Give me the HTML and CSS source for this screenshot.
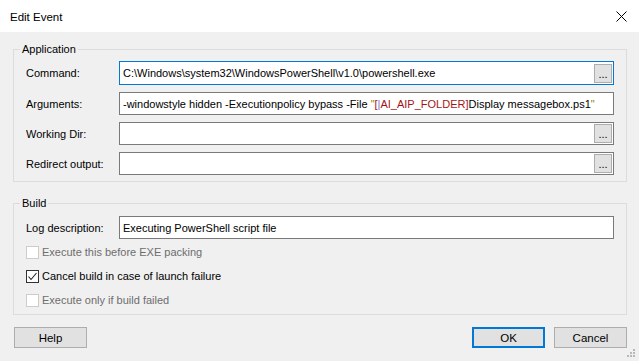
FILE: index.html
```html
<!DOCTYPE html>
<html lang="en">
<head>
  <meta charset="UTF-8">
  <title>Edit Event</title>
  <link rel="stylesheet" href="styles.css">
</head>
<body>
  <div class="titlebar">
    <span class="title">Edit Event</span>
    <svg class="close" width="11" height="11" viewBox="0 0 11 11">
      <path d="M0.5 0.5 L10.5 10.5 M10.5 0.5 L0.5 10.5" stroke="#000" stroke-width="1" fill="none"/>
    </svg>
  </div>

  <div class="dialog">
    <fieldset class="group app-group">
      <legend>Application</legend>
      <div class="form-grid">
        <label>Command:</label>
        <div class="field focused">
          <span class="value">C:\Windows\system32\WindowsPowerShell\v1.0\powershell.exe</span>
          <span class="browse">...</span>
        </div>

        <label>Arguments:</label>
        <div class="field">
          <span class="value">-windowstyle hidden -Executionpolicy bypass -File <span class="q">"</span><span class="br">[</span><span class="pipe">|</span><span class="br">AI_AIP_FOLDER]</span>Display messagebox.ps1<span class="q">"</span></span>
        </div>

        <label>Working Dir:</label>
        <div class="field">
          <span class="value"></span>
          <span class="browse">...</span>
        </div>

        <label>Redirect output:</label>
        <div class="field">
          <span class="value"></span>
          <span class="browse">...</span>
        </div>
      </div>
    </fieldset>

    <fieldset class="group build-group">
      <legend>Build</legend>
      <div class="form-grid">
        <label>Log description:</label>
        <div class="field">
          <span class="value">Executing PowerShell script file</span>
        </div>
      </div>
      <div class="checks">
        <div class="check-row disabled">
          <span class="box"></span>
          <span>Execute this before EXE packing</span>
        </div>
        <div class="check-row">
          <span class="box">
            <svg width="11" height="11" viewBox="0 0 11 11">
              <polyline points="1.5,5.5 4,8.5 9.5,2" stroke="#222" stroke-width="1.1" fill="none"/>
            </svg>
          </span>
          <span>Cancel build in case of launch failure</span>
        </div>
        <div class="check-row disabled">
          <span class="box"></span>
          <span>Execute only if build failed</span>
        </div>
      </div>
    </fieldset>

    <div class="buttons">
      <button class="btn">Help</button>
      <div class="right-buttons">
        <button class="btn default">OK</button>
        <button class="btn">Cancel</button>
      </div>
    </div>
  </div>

  <svg class="grip" width="10" height="10" viewBox="0 0 10 10">
    <rect x="7" y="1" width="2" height="2" fill="#b8b8b8"/>
    <rect x="4" y="4" width="2" height="2" fill="#b8b8b8"/>
    <rect x="7" y="4" width="2" height="2" fill="#b8b8b8"/>
    <rect x="1" y="7" width="2" height="2" fill="#b8b8b8"/>
    <rect x="4" y="7" width="2" height="2" fill="#b8b8b8"/>
    <rect x="7" y="7" width="2" height="2" fill="#b8b8b8"/>
  </svg>
</body>
</html>
```

FILE: styles.css
```css
html, body {
  margin: 0;
  padding: 0;
  width: 639px;
  height: 361px;
  overflow: hidden;
}

body {
  font-family: "Liberation Sans", Arial, sans-serif;
  font-size: 11px;
  color: #000;
  background-color: #f0f0f0;
  position: relative;
}

.titlebar {
  height: 32px;
  background-color: #fff;
  display: flex;
  align-items: center;
  justify-content: space-between;
  padding: 0 12px 0 10px;
}

.title {
  font-size: 11.5px;
  margin-top: 1px;
}

.close {
  margin-top: 1px;
}

.dialog {
  padding: 9px 12px 0 13px;
}

.group {
  margin: 0;
  border: 1px solid #dcdcdc;
  padding: 4px 12px 6px 12px;
  min-width: 0;
}

.group legend {
  padding: 0 2px;
  margin-left: -6px;
  line-height: 16px;
}

.build-group {
  margin-top: 13px;
  padding: 5px 12px 2px 12px;
}

.form-grid {
  display: grid;
  grid-template-columns: 93px 1fr;
  row-gap: 7px;
  align-items: center;
}

.form-grid label {
  line-height: 14px;
}

.field {
  height: 23px;
  box-sizing: border-box;
  border: 1px solid #7a7a7a;
  background-color: #fff;
  display: flex;
  align-items: center;
  padding: 0 1px 0 3px;
}

.field.focused {
  height: 24px;
  border-color: #0078d7;
}

.value {
  flex: 1;
  white-space: nowrap;
  overflow: hidden;
}

.q {
  color: #a67c00;
}

.br {
  color: #a31515;
}

.pipe {
  color: #8a6fd0;
}

.browse {
  width: 18px;
  height: 19px;
  box-sizing: border-box;
  border: 1px solid #adadad;
  background-color: #e1e1e1;
  display: flex;
  align-items: flex-end;
  justify-content: center;
  padding-bottom: 3px;
  font-size: 11px;
  line-height: 10px;
}

.checks {
  padding-top: 1px;
}

.check-row {
  height: 24px;
  display: flex;
  align-items: center;
}

.box {
  width: 13px;
  height: 13px;
  box-sizing: border-box;
  border: 1px solid #333;
  background-color: #fff;
  margin-right: 3px;
  display: flex;
  align-items: center;
  justify-content: center;
}

.check-row.disabled {
  color: #6d6d6d;
}

.check-row.disabled .box {
  border-color: #cccccc;
}

.buttons {
  margin-top: 12px;
  display: flex;
  justify-content: space-between;
  padding-left: 1px;
}

.right-buttons {
  display: flex;
  gap: 9px;
}

.btn {
  width: 73px;
  height: 21px;
  box-sizing: border-box;
  border: 1px solid #adadad;
  background-color: #e1e1e1;
  font-family: "Liberation Sans", Arial, sans-serif;
  font-size: 11.5px;
  color: #000;
  padding: 0;
}

.btn.default {
  border: 2px solid #0078d7;
}

.grip {
  position: absolute;
  right: 3px;
  bottom: 3px;
}
```
